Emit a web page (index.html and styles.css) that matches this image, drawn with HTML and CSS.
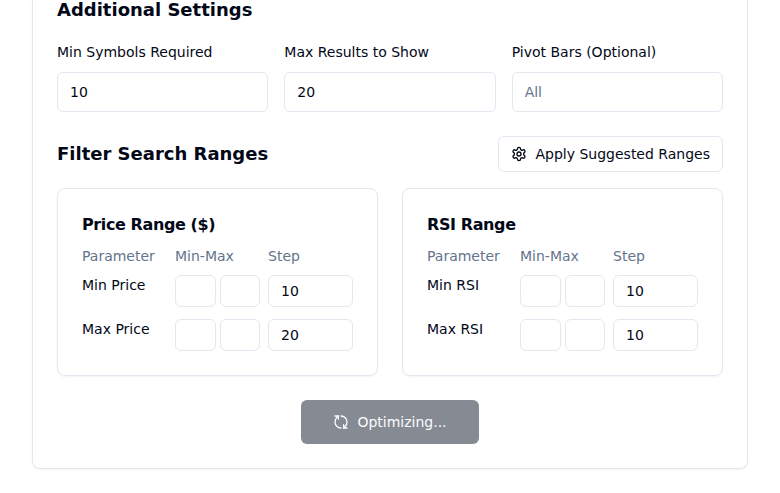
FILE: index.html
```html
<!DOCTYPE html>
<html lang="en">
<head>
<meta charset="utf-8">
<title>Optimizer Settings</title>
<link rel="stylesheet" href="styles.css">
</head>
<body>
<main class="panel">
  <h3 class="heading">Additional Settings</h3>
  <div class="settings">
    <label class="field"><span>Min Symbols Required</span><input class="input" value="10"></label>
    <label class="field"><span>Max Results to Show</span><input class="input" value="20"></label>
    <label class="field"><span>Pivot Bars (Optional)</span><input class="input" placeholder="All"></label>
  </div>
  <div class="filter-head">
    <h3 class="heading">Filter Search Ranges</h3>
    <button class="btn-outline">
      <svg class="icon" viewBox="0 0 24 24"><path d="M12.22 2h-.44a2 2 0 0 0-2 2v.18a2 2 0 0 1-1 1.73l-.43.25a2 2 0 0 1-2 0l-.15-.08a2 2 0 0 0-2.73.73l-.22.38a2 2 0 0 0 .73 2.73l.15.1a2 2 0 0 1 1 1.72v.51a2 2 0 0 1-1 1.74l-.15.09a2 2 0 0 0-.73 2.73l.22.38a2 2 0 0 0 2.73.73l.15-.08a2 2 0 0 1 2 0l.43.25a2 2 0 0 1 1 1.73V20a2 2 0 0 0 2 2h.44a2 2 0 0 0 2-2v-.18a2 2 0 0 1 1-1.73l.43-.25a2 2 0 0 1 2 0l.15.08a2 2 0 0 0 2.73-.73l.22-.39a2 2 0 0 0-.73-2.73l-.15-.08a2 2 0 0 1-1-1.74v-.5a2 2 0 0 1 1-1.74l.15-.09a2 2 0 0 0 .73-2.73l-.22-.38a2 2 0 0 0-2.73-.73l-.15.08a2 2 0 0 1-2 0l-.43-.25a2 2 0 0 1-1-1.73V4a2 2 0 0 0-2-2z"/><circle cx="12" cy="12" r="3"/></svg>
      Apply Suggested Ranges
    </button>
  </div>
  <div class="cards">
    <section class="card">
      <h4 class="card-title">Price Range ($)</h4>
      <div class="row row-head"><span>Parameter</span><span>Min-Max</span><span>Step</span></div>
      <div class="row"><span class="name">Min Price</span><div class="pair"><input class="input small"><input class="input small"></div><input class="input small" value="10"></div>
      <div class="row"><span class="name">Max Price</span><div class="pair"><input class="input small"><input class="input small"></div><input class="input small" value="20"></div>
    </section>
    <section class="card">
      <h4 class="card-title">RSI Range</h4>
      <div class="row row-head"><span>Parameter</span><span>Min-Max</span><span>Step</span></div>
      <div class="row"><span class="name">Min RSI</span><div class="pair"><input class="input small"><input class="input small"></div><input class="input small" value="10"></div>
      <div class="row"><span class="name">Max RSI</span><div class="pair"><input class="input small"><input class="input small"></div><input class="input small" value="10"></div>
    </section>
  </div>
  <div class="actions">
    <button class="btn-primary" disabled>
      <svg class="icon turned" viewBox="0 0 24 24"><path d="M3 12a9 9 0 0 1 9-9 9.75 9.75 0 0 1 6.74 2.74L21 8"/><path d="M21 3v5h-5"/><path d="M21 12a9 9 0 0 1-9 9 9.75 9.75 0 0 1-6.74-2.74L3 16"/><path d="M8 16H3v5"/></svg>
      Optimizing...
    </button>
  </div>
</main>
</body>
</html>
```

FILE: styles.css
```css
* { box-sizing: border-box; }
body {
  margin: 0;
  height: 493px;
  overflow: hidden;
  background: #fff;
  color: #020817;
  font: 14px/20px "DejaVu Sans", sans-serif;
}
.panel {
  display: flow-root;
  margin: 0 32px;
  height: 469px;
  padding: 0 24px;
  border: 1px solid #e2e8f0;
  border-top: 0;
  border-radius: 0 0 8px 8px;
  box-shadow: 0 1px 2px rgba(0, 0, 0, .05);
}
.heading { margin: 0; font-size: 18px; line-height: 28px; font-weight: 600; }
.panel > .heading { margin-top: -4px; }
.settings { display: grid; grid-template-columns: repeat(3, 1fr); gap: 16px; margin-top: 16px; }
.field { display: grid; gap: 8px; line-height: 24px; }
.input {
  width: 100%;
  min-width: 0;
  height: 40px;
  padding: 8px 12px;
  border: 1px solid #e2e8f0;
  border-radius: 6px;
  background: #fff;
  color: inherit;
  font: inherit;
  line-height: 20px;
}
.input::placeholder { color: #64748b; opacity: 1; }
.input.small { height: 32px; padding: 4px 12px; }
.filter-head { display: flex; justify-content: space-between; align-items: center; margin-top: 24px; }
button { display: flex; align-items: center; border-radius: 6px; font: inherit; font-weight: 500; white-space: nowrap; }
.icon { width: 16px; height: 16px; margin-right: 8px; fill: none; stroke: currentColor; stroke-width: 2; stroke-linecap: round; stroke-linejoin: round; }
.icon.turned { transform: rotate(-90deg); }
.btn-outline { height: 36px; padding: 0 12px; border: 1px solid #e2e8f0; background: #fff; color: inherit; }
.cards { display: grid; grid-template-columns: 1fr 1fr; gap: 24px; margin-top: 16px; }
.card { height: 188px; padding: 24px; border: 1px solid #e2e8f0; border-radius: 8px; box-shadow: 0 1px 2px rgba(0, 0, 0, .05); }
.card-title { margin: 0 0 9px; font-size: 16px; line-height: 24px; font-weight: 600; letter-spacing: -.4px; }
.row { display: grid; grid-template-columns: repeat(3, 1fr); gap: 8px; margin-bottom: 12px; }
.row-head { margin-bottom: 9px; color: #64748b; }
.pair { display: flex; gap: 4px; }
.actions { display: flex; justify-content: center; margin-top: 24px; }
.btn-primary { height: 44px; padding: 0 32px; border: 0; background: #0f172a; color: #f8fafc; opacity: .5; }
```
